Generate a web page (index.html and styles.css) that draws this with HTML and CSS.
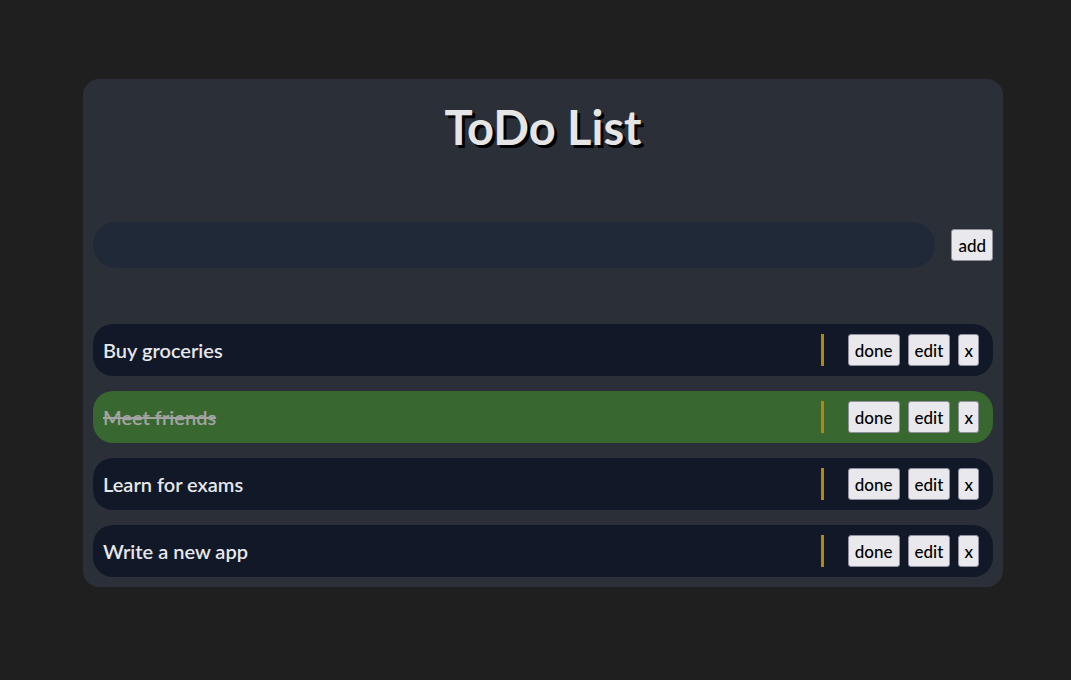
FILE: index.html
```html
<!DOCTYPE html>
<html>
<head>
<meta charset="utf-8">
<link rel="stylesheet" href="styles.css">
</head>
<body>
<div class="card">
  <h1 class="title">ToDo List</h1>
  <div class="add-row">
    <input class="new-input" type="text">
    <button class="btn">add</button>
  </div>
  <ul class="list">
    <li class="item"><span class="text">Buy groceries</span><span class="sep"></span><button class="btn">done</button><button class="btn">edit</button><button class="btn btn-x">x</button></li>
    <li class="item done"><span class="text">Meet friends</span><span class="sep"></span><button class="btn">done</button><button class="btn">edit</button><button class="btn btn-x">x</button></li>
    <li class="item"><span class="text">Learn for exams</span><span class="sep"></span><button class="btn">done</button><button class="btn">edit</button><button class="btn btn-x">x</button></li>
    <li class="item"><span class="text">Write a new app</span><span class="sep"></span><button class="btn">done</button><button class="btn">edit</button><button class="btn btn-x">x</button></li>
  </ul>
</div>
</body>
</html>
```
FILE: styles.css
```css
html, body {
  margin: 0;
  padding: 0;
  background: #1f1f1f;
  font-family: "Lato", "Open Sans", sans-serif;
}
body {
  padding-top: 79px;
}
.card {
  width: 920px;
  margin-left: 83px;
  box-sizing: border-box;
  background: #2b2f38;
  border-radius: 16px;
  padding: 0 10px 10px 10px;
}
.title {
  margin: 0;
  padding-top: 20px;
  height: 143px;
  box-sizing: border-box;
  text-align: center;
  font-size: 47px;
  font-weight: 700;
  color: #e5e5e5;
  text-shadow: 3px 3px 0 #000;
  line-height: 56px;
}
.add-row {
  display: flex;
  align-items: center;
  gap: 16px;
  height: 46px;
}
.new-input {
  flex: 1;
  height: 46px;
  box-sizing: border-box;
  border: none;
  border-radius: 23px;
  background: #1f2937;
  outline: none;
  padding: 0 16px;
  color: #e5e7eb;
}
.btn {
  font-family: "Lato", sans-serif;
  font-size: 17px;
  font-weight: 500;
  height: 32px;
  padding: 0 6px;
  background: #e9e9ed;
  color: #000;
  border: 1px solid #8f8f9d;
  border-radius: 3px;
}
.btn-x {
  padding: 0 5px;
}
.list {
  list-style: none;
  margin: 56px 0 0 0;
  padding: 0;
  display: flex;
  flex-direction: column;
  gap: 15px;
}
.item {
  display: flex;
  align-items: center;
  height: 52px;
  border-radius: 20px;
  background: #111827;
  padding: 0 14px 0 10px;
  gap: 8px;
}
.item.done {
  background: #386830;
}
.text {
  flex: 1;
  font-size: 20px;
  font-weight: 600;
  color: #e5e7eb;
}
.item.done .text {
  color: #a3a3a3;
  text-decoration: line-through;
}
.sep {
  width: 3px;
  height: 32px;
  background: #b8860b;
  margin-right: 16px;
}
```
